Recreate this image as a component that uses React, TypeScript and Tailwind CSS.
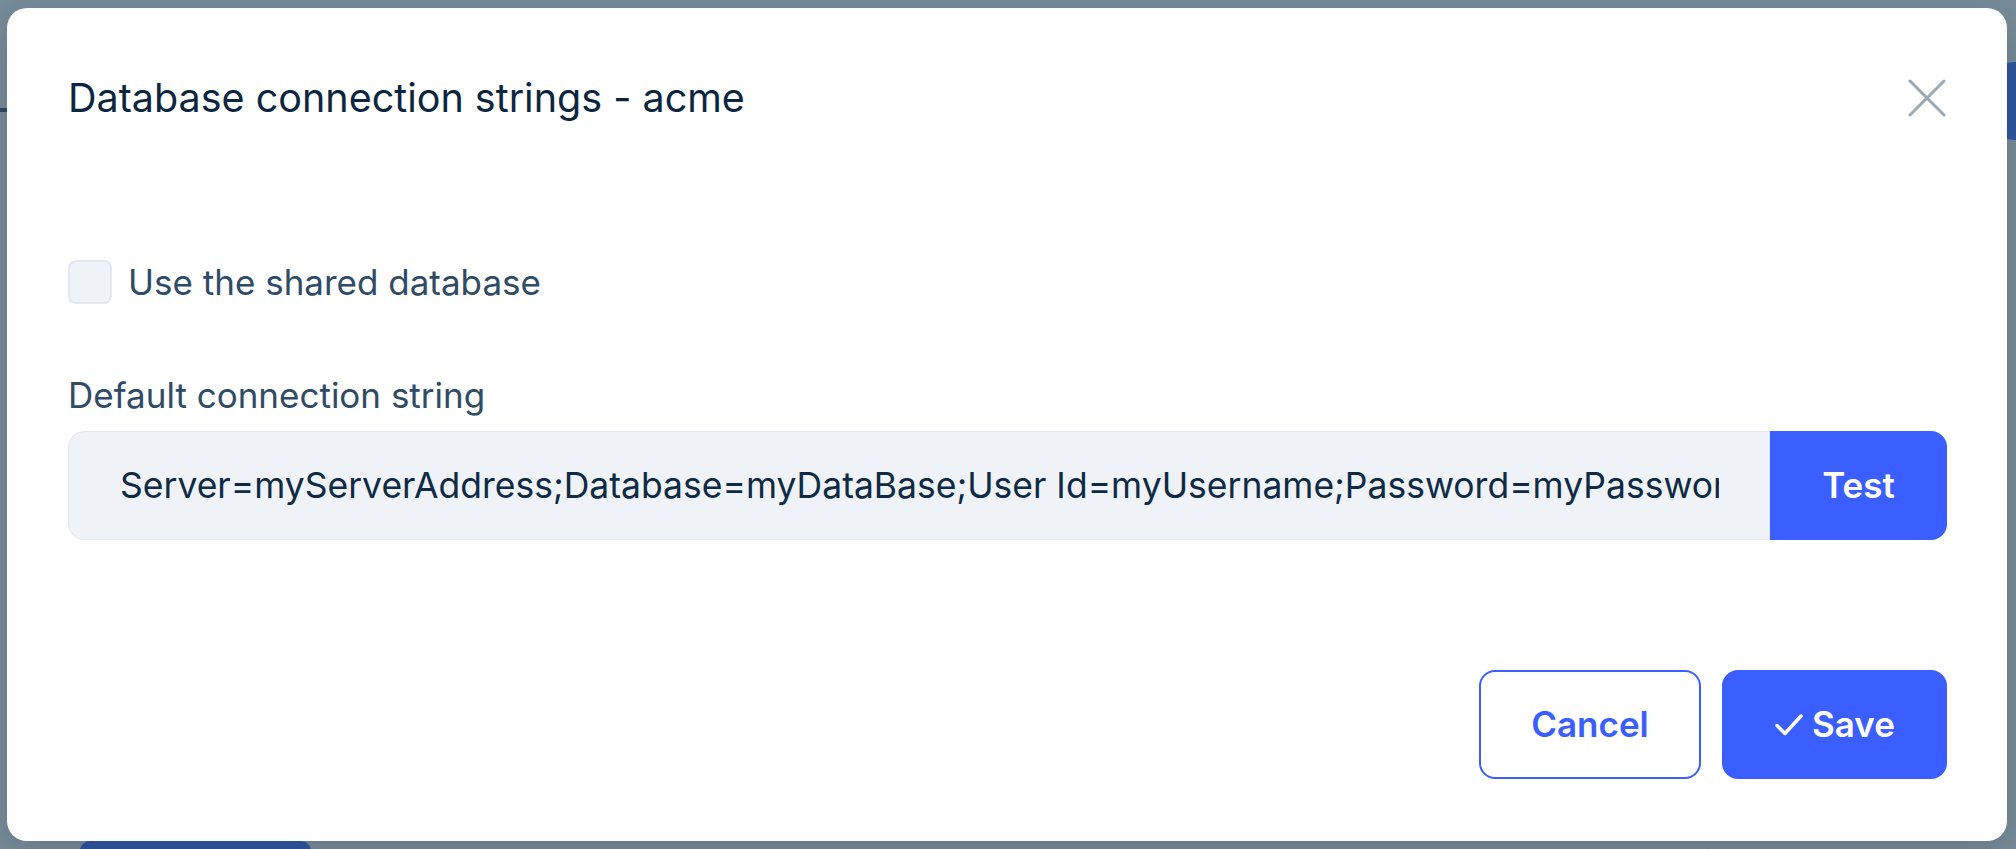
import React from "react";

export default function App() {
  return (
    <div
      className="relative h-[849px] w-full overflow-hidden bg-[#778b99]"
      style={{ fontFamily: "Inter, 'Noto Sans', sans-serif" }}
    >
      {/* page underneath */}
      <div className="flex h-full flex-col">
        <div className="flex items-start justify-between pt-[62px]">
          <div className="mt-[46px] h-[4px] w-[40px] bg-[#2e4c66]" />
          <div className="mr-[-60px] h-[78px] w-[100px] rounded-full bg-[#2f55a0]" />
        </div>
        <div className="mt-auto flex h-[60px] translate-y-[52px] items-start">
          <div className="ml-[80px] h-[50px] w-[231px] rounded-t-[10px] bg-[#2f55a0]" />
          <div className="ml-[428px] mt-[2px] text-[30px] leading-[36px] text-[#2b4158]">Standard</div>
          <div className="ml-[790px] mt-[2px] text-[30px] leading-[36px] text-[#2b4158]">Active</div>
        </div>
      </div>

      {/* modal overlay */}
      <div className="absolute left-[7px] top-[8px] flex h-[833px] w-[2000px] flex-col rounded-[20px] bg-white px-[60px] shadow-[0_10px_40px_rgba(0,0,0,0.15)]">
        <div className="flex items-center justify-between pl-[1px] pt-[60px]">
          <h2 className="text-[39.5px] leading-[60px] font-normal text-[#0d2640]">
            Database connection strings - acme
          </h2>
          <button className="flex h-[40px] w-[40px] items-center justify-center text-[#9aa8b3]">
            <svg width="38" height="38" viewBox="0 0 38 38" fill="none">
              <path d="M2 2L36 36M36 2L2 36" stroke="currentColor" strokeWidth="3" strokeLinecap="round" />
            </svg>
          </button>
        </div>

        <div className="mt-[132px] flex items-center gap-[16px] pl-[1px]">
          <div className="h-[44px] w-[44px] rounded-[8px] border-2 border-[#e3e8ef] bg-[#eff3f7]" />
          <span className="text-[35px] leading-[44px] text-[#2f4b66]">Use the shared database</span>
        </div>

        <label className="mt-[69px] pl-[1px] text-[35px] leading-[44px] text-[#2f4b66]">
          Default connection string
        </label>

        <div className="mt-[14px] ml-[1px] flex h-[109px]">
          <div className="flex min-w-0 flex-1 items-center overflow-hidden rounded-l-[16px] border border-[#e3e8ef] bg-[#eff3f7] pl-[51px] pr-[50px]">
            <span className="overflow-hidden whitespace-nowrap text-[35.5px] text-[#0f2a44]">
              Server=myServerAddress;Database=myDataBase;User Id=myUsername;Password=myPassword;
            </span>
          </div>
          <button className="w-[177px] shrink-0 rounded-r-[16px] bg-[#3a5eff] text-[35px] font-semibold text-white">
            Test
          </button>
        </div>

        <div className="mt-[130px] flex justify-end gap-[21px]">
          <button className="h-[109px] w-[222px] rounded-[16px] border-2 border-[#3a5eff] bg-white text-[35px] font-semibold text-[#3a5eff]">
            Cancel
          </button>
          <button className="flex h-[109px] w-[225px] items-center justify-center gap-[8px] rounded-[16px] bg-[#3a5eff] text-[35px] font-semibold text-white">
            <svg width="30" height="26" viewBox="0 0 30 26" fill="none">
              <path d="M3 13.5L11 21.5L27 4" stroke="currentColor" strokeWidth="3.5" strokeLinecap="round" strokeLinejoin="round" />
            </svg>
            Save
          </button>
        </div>
      </div>
    </div>
  );
}
